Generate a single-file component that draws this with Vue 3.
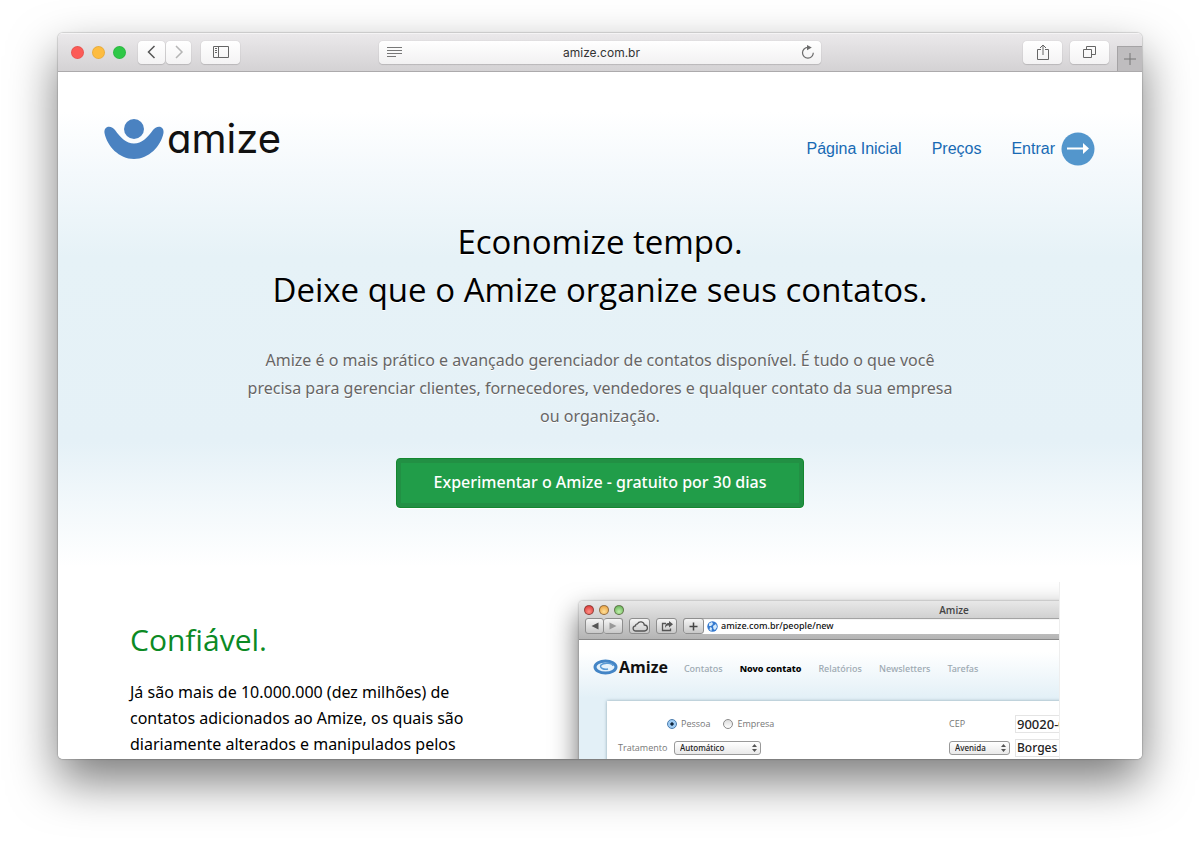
<script setup>
import { ref } from 'vue'

const address = ref('amize.com.br')
const previewAddress = ref('amize.com.br/people/new')
const kind = ref('pessoa')
const cep = ref('90020-001')
const street = ref('Borges de Medeiros')
const siteLinks = ['Página Inicial', 'Preços']
const appLinks = ['Contatos', 'Novo contato', 'Relatórios', 'Newsletters', 'Tarefas']
</script>

<template>
  <div class="desktop">
    <div class="window">
      <div class="toolbar">
        <div class="tools">
          <div class="lights"><i class="red"></i><i class="yellow"></i><i class="green"></i></div>
          <div class="pair">
            <button class="tool back" aria-label="Voltar">
              <svg width="10" height="14" viewBox="0 0 10 14"><path d="M7.500 1 1.500 7l6 6" fill="none" stroke="#555" stroke-width="1.500" /></svg>
            </button>
            <button class="tool forward" aria-label="Avançar">
              <svg width="10" height="14" viewBox="0 0 10 14"><path d="m2 1 6 6-6 6" fill="none" stroke="#b5b5b5" stroke-width="1.500" /></svg>
            </button>
          </div>
          <button class="tool wide" aria-label="Barra lateral">
            <svg width="16" height="14" viewBox="0 0 16 14"><path d="M.5 1.500h15v11H.5zM5.500 1.500v11M2 3.500h2M2 5.500h2M2 7.500h2" fill="none" stroke="#666" /></svg>
          </button>
        </div>
        <div class="address">
          <svg width="15" height="12" viewBox="0 0 15 12"><path d="M0 1.500h15M0 4.500h15M0 7.500h15M0 10.500h9" stroke="#777" stroke-width="1" /></svg>
          <input v-model="address" aria-label="Endereço" />
          <button class="reload" aria-label="Recarregar">
            <svg width="14" height="15" viewBox="0 0 14 15"><path d="M12.300 7.800a5.400 5.400 0 1 1-5.400-5.400h1" fill="none" stroke="#6a6a6a" stroke-width="1.200" /><path d="M6 0v5.200l4.800-2.600z" fill="#6a6a6a" /></svg>
          </button>
        </div>
        <div class="tools end">
          <button class="tool wide" aria-label="Compartilhar">
            <svg width="12" height="17" viewBox="0 0 12 17"><path d="M4 5.500H.5v10h11v-10H8M6 11V1M3 4l3-3 3 3" fill="none" stroke="#666" /></svg>
          </button>
          <button class="tool wide" aria-label="Abas">
            <svg width="13" height="14" viewBox="0 0 13 14"><path d="M.5 4.500h8v8h-8zM3.500 4V1.500h9v8H9" fill="none" stroke="#666" /></svg>
          </button>
          <button class="new-tab" aria-label="Nova aba">
            <svg width="12" height="12" viewBox="0 0 12 12"><path d="M6 0v12M0 6h12" stroke="#777" /></svg>
          </button>
        </div>
      </div>

      <main class="page">
        <header class="site-header">
          <a class="brand" href="#">
            <svg width="60" height="42" viewBox="0 0 60 42">
              <path d="M.5 15C0 11 2 8.700 5 8.700 7.500 8.700 9.500 10 11 12 17 20 22 25.500 30 25.500S43 20 49 12C50.500 10 52.500 8.700 55 8.700 58 8.700 60 11 59.500 15 57 28 45 41 30 41S3 28 .5 15Z" fill="#4a82c1" />
              <circle cx="30" cy="11" r="10" fill="#4a82c1" />
            </svg>
            <span>amize</span>
          </a>
          <nav class="site-nav">
            <a v-for="link in siteLinks" :key="link" href="#">{{ link }}</a>
            <a class="enter" href="#">Entrar
              <svg width="34" height="34" viewBox="0 0 34 34"><circle cx="17" cy="17" r="16.500" fill="#5396cc" /><path d="M6 16.500h17" stroke="#fff" stroke-width="2" /><path d="m22 11 6 5.500-6 5.500z" fill="#fff" /></svg>
            </a>
          </nav>
        </header>

        <section class="hero">
          <h1>Economize tempo.<br />Deixe que o Amize organize seus contatos.</h1>
          <p>Amize é o mais prático e avançado gerenciador de contatos disponível. É tudo o que você precisa para gerenciar clientes, fornecedores, vendedores e qualquer contato da sua empresa ou organização.</p>
          <button class="cta">Experimentar o Amize - gratuito por 30 dias</button>
        </section>

        <section class="feature">
          <div class="copy">
            <h2>Confiável.</h2>
            <p>Já são mais de 10.000.000 (dez milhões) de contatos adicionados ao Amize, os quais são diariamente alterados e manipulados pelos</p>
          </div>

          <div class="shot">
            <div class="mini">
              <div class="mini-chrome">
                <div class="mini-title">
                  <div class="mini-lights"><i class="red"></i><i class="yellow"></i><i class="green"></i></div>
                  <span>Amize</span>
                </div>
                <div class="mini-tools">
                  <div class="mini-pair">
                    <button aria-label="Voltar"><svg width="8" height="8" viewBox="0 0 8 8"><path d="M7.500.5v7L.5 4z" fill="#555" /></svg></button>
                    <button aria-label="Avançar"><svg width="8" height="8" viewBox="0 0 8 8"><path d="M.5.5v7l7-3.500z" fill="#999" /></svg></button>
                  </div>
                  <button class="mini-btn" aria-label="iCloud">
                    <svg width="16" height="11" viewBox="0 0 16 11"><path d="M4 10a2.600 2.600 0 0 1-.5-5.200 2 2 0 0 1 2-2A3.600 3.600 0 0 1 12.300 4 3 3 0 0 1 12.500 10z" fill="none" stroke="#555" stroke-width="1.300" /></svg>
                  </button>
                  <button class="mini-btn" aria-label="Compartilhar">
                    <svg width="12" height="11" viewBox="0 0 12 11"><path d="M5 2.500H1.500v7h8V7.500" fill="none" stroke="#555" stroke-width="1.300" /><path d="M8 0v2C5 2 4 4 4 7c1-2 2-2.500 4-2.500v2L12 3.200z" fill="#555" /></svg>
                  </button>
                  <div class="mini-address">
                    <button class="mini-btn" aria-label="Adicionar favorito"><svg width="9" height="9" viewBox="0 0 9 9"><path d="M4.500.5v8M.5 4.500h8" stroke="#444" stroke-width="1.500" /></svg></button>
                    <svg class="globe" width="11" height="11" viewBox="0 0 11 11"><circle cx="5.500" cy="5.500" r="5.200" fill="#3579cf" /><path d="M2 2.500 5 1l1 2-2 2-2 0zM6 5l3-2 1 3-2 3-1.500-1zM3 6l2 1-.5 3-2-1z" fill="#d6ebfb" /></svg>
                    <input v-model="previewAddress" aria-label="Endereço da prévia" />
                  </div>
                </div>
              </div>

              <div class="app">
                <div class="app-header">
                  <a class="app-brand" href="#">
                    <svg width="25" height="16" viewBox="0 0 25 16"><ellipse cx="12.500" cy="8" rx="10.500" ry="6" fill="#e5f2fb" stroke="#4385c6" stroke-width="3" /><path d="M20 7c0-3-9-4-12-1-2 3 3 5 7 4" fill="none" stroke="#5b9bd4" stroke-width="1.500" /></svg>
                    <span>Amize</span>
                  </a>
                  <nav class="app-nav">
                    <a v-for="link in appLinks" :key="link" href="#" :class="{ current: link === 'Novo contato' }">{{ link }}</a>
                  </nav>
                </div>

                <form class="panel">
                  <div class="column">
                    <div class="row kinds">
                      <label><input v-model="kind" type="radio" name="kind" value="pessoa" />Pessoa</label>
                      <label><input v-model="kind" type="radio" name="kind" value="empresa" />Empresa</label>
                    </div>
                    <div class="row">
                      <label class="name" for="treatment">Tratamento</label>
                      <span class="picker long">
                        <select id="treatment"><option>Automático</option></select>
                        <svg width="5" height="8" viewBox="0 0 5 8"><path d="M2.500 0 5 3H0zM2.500 8 0 5h5z" fill="#555" /></svg>
                      </span>
                    </div>
                  </div>
                  <div class="column">
                    <div class="row">
                      <label class="cep" for="cep">CEP</label>
                      <input id="cep" v-model="cep" class="field code" />
                    </div>
                    <div class="row">
                      <span class="picker short">
                        <select aria-label="Tipo de logradouro"><option>Avenida</option></select>
                        <svg width="5" height="8" viewBox="0 0 5 8"><path d="M2.500 0 5 3H0zM2.500 8 0 5h5z" fill="#555" /></svg>
                      </span>
                      <input v-model="street" class="field" aria-label="Logradouro" />
                    </div>
                  </div>
                </form>
              </div>
            </div>
          </div>
        </section>
      </main>
    </div>
  </div>
</template>

<style>
body { margin: 0; background: #fff; }
</style>

<style scoped>
* { box-sizing: border-box; }
a { text-decoration: none; }
svg { display: block; flex: none; }
button { padding: 0; border: 0; font: inherit; color: inherit; display: flex; align-items: center; justify-content: center; }
input { min-width: 0; font: inherit; color: inherit; }

.desktop { height: 100vh; padding: 33px 58px 83px; overflow: hidden; font-family: "Open Sans", "Noto Sans", sans-serif; }
.window {
  height: 100%;
  display: flex;
  flex-direction: column;
  overflow: hidden;
  border-radius: 5px;
  background: #fff;
  box-shadow: 0 0 1px 1px rgba(0, 0, 0, .14), 0 22px 48px rgba(0, 0, 0, .52);
}

.toolbar {
  flex: none;
  height: 39px;
  display: grid;
  grid-template-columns: 1fr 442px 1fr;
  align-items: center;
  background: linear-gradient(#ebe9eb, #d4d2d4);
  border-bottom: 1px solid #acaaac;
  box-shadow: inset 0 1px #f5f4f5;
}
.tools { display: flex; align-items: center; gap: 10px; height: 100%; }
.tools.end { justify-content: flex-end; gap: 8px; }
.lights { display: flex; gap: 8px; padding: 0 2px 0 13px; }
.lights i { width: 13px; height: 13px; border-radius: 50%; border: 1px solid rgba(0, 0, 0, .08); }
.lights .red { background: #fc5b57; }
.lights .yellow { background: #fdbc40; }
.lights .green { background: #2fc847; }
.pair { display: flex; gap: 1px; }
.tool { height: 23px; border-radius: 4px; background: linear-gradient(#fff, #f4f3f4); box-shadow: 0 0 1px rgba(0, 0, 0, .25), 0 1px 1px rgba(0, 0, 0, .12); }
.back { width: 27px; }
.forward { width: 25px; }
.wide { width: 39px; }
.new-tab { width: 25px; height: 25px; align-self: flex-end; background: #bfbdbf; border: solid #a5a3a5; border-width: 1px 0 0 1px; }
.address { height: 23px; padding: 0 6px 0 8px; display: flex; align-items: center; border-radius: 4px; background: linear-gradient(#fff, #f2f1f2); box-shadow: 0 0 1px rgba(0, 0, 0, .25), 0 1px 1px rgba(0, 0, 0, .12); }
.address input { flex: 1; border: 0; background: none; padding: 0; text-align: center; font: 12px Inter, sans-serif; color: #333; }
.reload { background: none; }

.page { flex: 1; min-height: 0; overflow: hidden; background: linear-gradient(#fff 40px, #f4f9fc 100px, #e6f2f7 185px, #e5f1f7 370px, #f2f8fb 430px, #fff 495px); }
.site-header { height: 118px; padding: 45px 47px 0 46px; display: flex; justify-content: space-between; }
.brand { height: 44px; display: flex; align-items: center; gap: 3px; color: #111; }
.brand span { font: 40px/44px Inter, sans-serif; font-feature-settings: "cv11"; }
.site-nav { height: 64px; display: flex; align-items: center; gap: 30px; font: 16px "Liberation Sans", sans-serif; }
.site-nav a { color: #176ab4; }
.site-nav .enter { display: flex; align-items: center; gap: 6px; }

.hero { padding: 28px 20px 0; display: flex; flex-direction: column; align-items: center; text-align: center; }
h1 { margin: 0; font-size: 33px; line-height: 48px; font-weight: 400; color: #000; text-shadow: 0 1px #fff; }
.hero p { width: 720px; max-width: 100%; margin: 32px 0 0; font: 16px/28px "Noto Sans", sans-serif; color: #666; text-shadow: 0 1px #fff; }
.cta { margin-top: 28px; width: 408px; max-width: 100%; height: 50px; border: 1px solid #14872f; border-radius: 4px; background: #219d49; box-shadow: inset 0 0 0 4px #229044, 0 1px #fff; color: #fff; font: 500 16px "Noto Sans", sans-serif; padding-bottom: 3px; }

.feature { padding: 74px 82px 0 72px; display: flex; justify-content: space-between; }
.copy { width: 360px; padding-top: 36px; }
h2 { margin: 0; font-size: 30px; line-height: 44px; font-weight: 400; color: #0b8a24; }
.copy p { margin: 17px 0 0; font: 16px/26px "Noto Sans", sans-serif; color: #000; }

.shot { width: 520px; height: 260px; padding: 19px 0 0 39px; overflow: hidden; border-right: 1px solid #eee; }
.mini { width: 750px; height: 400px; border-radius: 4px 4px 0 0; box-shadow: 0 12px 28px rgba(0, 0, 0, .6), 0 0 2px rgba(0, 0, 0, .4); background: #fff; }
.mini-chrome { height: 39px; border-radius: 4px 4px 0 0; background: linear-gradient(#e8e8e8, #b4b4b4); border-bottom: 1px solid #888; }
.mini-title { height: 17px; display: grid; grid-template-columns: 1fr auto 1fr; align-items: center; padding: 0 5px; font-size: 10px; font-weight: 600; color: #444; }
.mini-lights { display: flex; gap: 5px; }
.mini-lights i { width: 10px; height: 10px; border-radius: 50%; border: 1px solid rgba(70, 50, 40, .55); }
.mini-lights .red { background: radial-gradient(circle at 50% 70%, #ff9187, #d92c2c); }
.mini-lights .yellow { background: radial-gradient(circle at 50% 70%, #ffe09a, #e79a34); }
.mini-lights .green { background: radial-gradient(circle at 50% 70%, #c0efaa, #59ab4c); }
.mini-tools { display: flex; gap: 6px; padding: 0 6px; }
.mini-pair { display: flex; }
.mini-pair button, .mini-btn { height: 16px; border: 1px solid #8e8e8e; border-radius: 3px; background: linear-gradient(#f5f5f5, #c8c8c8); }
.mini-pair button { width: 19px; }
.mini-pair button + button { border-left: 0; }
.mini-btn { width: 21px; flex: none; }
.mini-address { flex: 1; height: 16px; display: flex; align-items: center; background: #fff; border-radius: 3px; box-shadow: inset 0 1px 1px #999; }
.mini-address .globe { margin: 0 3px; }
.mini-address input { flex: 1; border: 0; padding: 0; background: none; font: 500 9px/14px "Noto Sans", sans-serif; color: #111; }

.app { height: 360px; background: linear-gradient(#fff 12px, #e3f0f7 58px); }
.app-header { height: 61px; padding: 0 14px 8px; display: flex; align-items: center; gap: 16px; }
.app-brand { display: flex; align-items: center; gap: 1px; color: #111; font-size: 16px; font-weight: 700; }
.app-nav { display: flex; gap: 17px; padding-top: 3px; font: 500 9px "Noto Sans", sans-serif; }
.app-nav a { color: #9da9b2; }
.app-nav .current { color: #000; font-weight: 800; }
.panel { height: 300px; margin: 0 28px; padding: 12px 11px; display: flex; background: #fff; box-shadow: 0 0 3px rgba(50, 90, 110, .5); font-size: 9px; color: #777; }
.column { width: 331px; flex: none; display: flex; flex-direction: column; gap: 3px; }
.row { height: 21px; display: flex; align-items: center; }
.kinds { padding-left: 49px; gap: 13px; }
.kinds label { display: flex; align-items: center; gap: 4px; }
.kinds input { appearance: none; width: 10px; height: 10px; margin: 0; border: 1px solid #8a8a8a; border-radius: 50%; background: linear-gradient(#ddd, #fff); }
.kinds input:checked { border-color: #4a7cae; background: radial-gradient(circle, #10263d 24%, #9fcbf2 34%); }
.name { width: 56px; }
.picker { position: relative; height: 14px; display: flex; align-items: center; }
.picker select { appearance: none; width: 100%; height: 100%; border: 1px solid #999; border-radius: 3px; padding: 0 5px; background: linear-gradient(#fff, #e9e9e9); font: 500 8px/12px "Noto Sans", sans-serif; color: #222; }
.picker svg { position: absolute; right: 4px; pointer-events: none; }
.long { width: 87px; }
.short { width: 61px; margin-right: 5px; }
.cep { width: 66px; }
.field { width: 180px; height: 18px; border: 1px solid #e4e4e4; padding: 0 1px; font: 500 12px "Noto Sans", sans-serif; color: #222; }
.code { font-size: 13px; }
</style>
